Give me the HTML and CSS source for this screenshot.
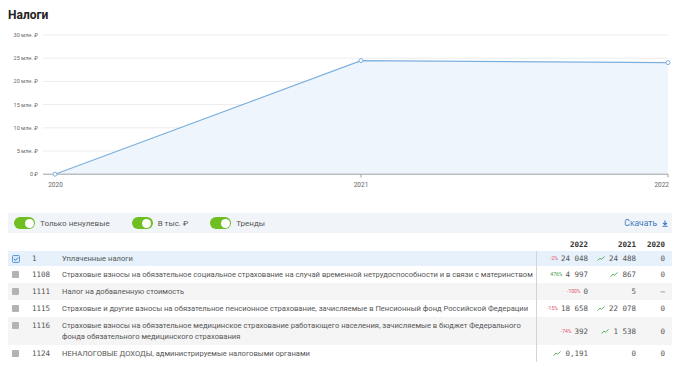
FILE: index.html
```html
<!DOCTYPE html>
<html lang="ru">
<head>
    <meta charset="UTF-8">
    <meta name="viewport" content="width=device-width, initial-scale=1.0">
    <title>Налоги</title>
    <link rel="stylesheet" href="styles.css">
</head>
<body>
    <div class="page">
        <h1 class="title">Налоги</h1>

        <!-- Chart -->
        <svg class="chart" width="664" height="170" viewBox="8 26 664 170">
            <g class="grid">
                <line x1="43" x2="668" y1="35" y2="35"/>
                <line x1="43" x2="668" y1="58.2" y2="58.2"/>
                <line x1="43" x2="668" y1="81.4" y2="81.4"/>
                <line x1="43" x2="668" y1="104.6" y2="104.6"/>
                <line x1="43" x2="668" y1="127.8" y2="127.8"/>
                <line x1="43" x2="668" y1="151" y2="151"/>
            </g>
            <g class="ylabels">
                <text x="38" y="37">30 млн. ₽</text>
                <text x="38" y="60.2">25 млн. ₽</text>
                <text x="38" y="83.4">20 млн. ₽</text>
                <text x="38" y="106.6">15 млн. ₽</text>
                <text x="38" y="129.8">10 млн. ₽</text>
                <text x="38" y="153">5 млн. ₽</text>
                <text x="38" y="176.2">0 ₽</text>
            </g>
            <polygon class="area" points="55,174.2 361,60.6 668,62.6 668,174.2"/>
            <line class="axis" x1="43" x2="668" y1="174.2" y2="174.2"/>
            <line class="axis" x1="361" x2="361" y1="174.2" y2="177.5"/>
            <line class="axis" x1="668" x2="668" y1="174.2" y2="177.5"/>
            <polyline class="line" points="55,174.2 361,60.6 668,62.6"/>
            <circle class="dot" cx="55" cy="174.2" r="2"/>
            <circle class="dot" cx="361" cy="60.6" r="2"/>
            <circle class="dot" cx="668" cy="62.6" r="2"/>
            <g class="xlabels">
                <text x="55.5" y="187">2020</text>
                <text x="361" y="187">2021</text>
                <text x="669" y="187" class="last">2022</text>
            </g>
        </svg>

        <div class="toolbar">
            <label class="switch"><span class="toggle"></span>Только ненулевые</label>
            <label class="switch"><span class="toggle"></span>В тыс. ₽</label>
            <label class="switch"><span class="toggle"></span>Тренды</label>
            <a class="download" href="#">Скачать
                <svg width="6" height="7" viewBox="0 0 6 7"><path d="M3 0.5V4.5M1 2.8L3 4.8L5 2.8M0.5 6.3H5.5" fill="none" stroke="#3a78c2" stroke-width="1.1"/></svg>
            </a>
        </div>

        <div class="table">
            <div class="row head">
                <div></div><div></div><div></div>
                <div class="num">2022</div>
                <div class="num">2021</div>
                <div class="num">2020</div>
            </div>

            <div class="row selected">
                <div><svg class="check-on" width="8" height="8" viewBox="0 0 8 8"><rect x="0.5" y="0.5" width="7" height="7" rx="1" fill="#d6e8fa" stroke="#5b9bd5"/><path d="M2 4L3.5 5.4L6 2.6" fill="none" stroke="#3f84cc" stroke-width="1"/></svg></div>
                <div class="code">1</div>
                <div class="name">Уплаченные налоги</div>
                <div class="num"><span class="pct down">-2%</span>24 048</div>
                <div class="num"><svg class="trend" viewBox="0 0 8 5"><polyline points="0.5,4.5 3,2.2 4.5,3.2 7.5,0.5"/></svg>24 488</div>
                <div class="num">0</div>
            </div>

            <div class="row">
                <div><span class="check"></span></div>
                <div class="code">1108</div>
                <div class="name">Страховые взносы на обязательное социальное страхование на случай временной нетрудоспособности и в связи с материнством</div>
                <div class="num"><span class="pct up">476%</span>4 997</div>
                <div class="num"><svg class="trend" viewBox="0 0 8 5"><polyline points="0.5,4.5 3,2.2 4.5,3.2 7.5,0.5"/></svg>867</div>
                <div class="num">0</div>
            </div>

            <div class="row alt">
                <div><span class="check"></span></div>
                <div class="code">1111</div>
                <div class="name">Налог на добавленную стоимость</div>
                <div class="num"><span class="pct down">-100%</span>0</div>
                <div class="num">5</div>
                <div class="num">–</div>
            </div>

            <div class="row">
                <div><span class="check"></span></div>
                <div class="code">1115</div>
                <div class="name">Страховые и другие взносы на обязательное пенсионное страхование, зачисляемые в Пенсионный фонд Российской Федерации</div>
                <div class="num"><span class="pct down">-15%</span>18 658</div>
                <div class="num"><svg class="trend" viewBox="0 0 8 5"><polyline points="0.5,4.5 3,2.2 4.5,3.2 7.5,0.5"/></svg>22 078</div>
                <div class="num">0</div>
            </div>

            <div class="row alt">
                <div><span class="check"></span></div>
                <div class="code">1116</div>
                <div class="name">Страховые взносы на обязательное медицинское страхование работающего населения, зачисляемые в бюджет Федерального фонда обязательного медицинского страхования</div>
                <div class="num"><span class="pct down">-74%</span>392</div>
                <div class="num"><svg class="trend" viewBox="0 0 8 5"><polyline points="0.5,4.5 3,2.2 4.5,3.2 7.5,0.5"/></svg>1 538</div>
                <div class="num">0</div>
            </div>

            <div class="row">
                <div><span class="check"></span></div>
                <div class="code">1124</div>
                <div class="name">НЕНАЛОГОВЫЕ ДОХОДЫ, администрируемые налоговыми органами</div>
                <div class="num"><svg class="trend" viewBox="0 0 8 5"><polyline points="0.5,4.5 3,2.2 4.5,3.2 7.5,0.5"/></svg>0,191</div>
                <div class="num">0</div>
                <div class="num">0</div>
            </div>
        </div>
    </div>
</body>
</html>
```

FILE: styles.css
```css
body {
    font-family: Roboto, "Noto Sans", sans-serif;
    background-color: #ffffff;
    color: #555555;
    margin: 0;
    padding: 0;
}
.page {
    padding: 8px 8px 0;
}
.title {
    margin: 0;
    font-size: 12px;
    line-height: 14px;
    font-weight: bold;
    color: #222222;
}
.chart {
    display: block;
    margin-top: 4px;
}
.grid line {
    stroke: #ececec;
    stroke-width: 1;
}
.ylabels text {
    font-size: 5.5px;
    fill: #666666;
    text-anchor: end;
}
.xlabels text {
    font-size: 6.5px;
    fill: #666666;
    text-anchor: middle;
}
.xlabels text.last {
    text-anchor: end;
}
.area {
    fill: #eef5fd;
}
.axis {
    stroke: #a0a0a0;
    stroke-width: 1;
}
.line {
    fill: none;
    stroke: #7eb0dd;
    stroke-width: 1.2;
}
.dot {
    fill: #ffffff;
    stroke: #7eb0dd;
    stroke-width: 1;
}
.toolbar {
    display: flex;
    align-items: center;
    height: 20px;
    margin-top: 17px;
    padding: 0 4px 0 6px;
    background-color: #f1f5fa;
    font-size: 8px;
}
.switch {
    display: flex;
    align-items: center;
    gap: 5px;
    margin-right: 22px;
    color: #555555;
}
.toggle {
    width: 21px;
    height: 12px;
    border-radius: 6px;
    background-color: #6fbe22;
    position: relative;
}
.toggle::after {
    content: "";
    position: absolute;
    right: 1.5px;
    top: 1.5px;
    width: 9px;
    height: 9px;
    border-radius: 50%;
    background-color: #ffffff;
}
.download {
    margin-left: auto;
    display: flex;
    align-items: center;
    gap: 5px;
    font-size: 8.5px;
    color: #3a78c2;
    text-decoration: none;
}
.table {
    margin-top: 5px;
}
.row {
    display: grid;
    grid-template-columns: 20px 30px 1fr 55px 48px 32px;
    font-size: 7.6px;
    line-height: 11px;
}
.row > div {
    padding-top: 3px;
    padding-bottom: 3px;
}
.row .name {
    padding-left: 4px;
    padding-right: 2px;
    border-right: 1px solid #d4d4d4;
}
.row.head {
    font-family: "DejaVu Sans Mono", monospace;
    font-weight: bold;
    color: #333333;
}
.row.head > div {
    padding-top: 1px;
    padding-bottom: 1px;
}
.row.head .name {
    border: none;
}
.row.selected {
    background-color: #e6f1fb;
}
.row.selected > div {
    padding-top: 2px;
    padding-bottom: 2px;
}
.row.alt {
    background-color: #f5f5f5;
}
.check {
    display: block;
    width: 7px;
    height: 7px;
    margin: 2px 0 0 4px;
    border-radius: 1px;
    background-color: #b3b3b3;
}
.check-on {
    display: block;
    margin: 1.5px 0 0 4px;
}
.code {
    padding-left: 4px;
    font-family: "DejaVu Sans Mono", monospace;
    font-size: 7.5px;
}
.num {
    display: flex;
    justify-content: flex-end;
    align-items: center;
    gap: 3px;
    padding-right: 4px;
    font-family: "DejaVu Sans Mono", monospace;
    font-size: 7.5px;
}
.row > .num:last-child {
    padding-right: 7px;
}
.pct {
    font-family: Roboto, sans-serif;
    font-size: 5px;
}
.pct.down {
    color: #e2506c;
}
.pct.up {
    color: #3c9c3c;
}
.trend {
    width: 8px;
    height: 5px;
    margin-right: 1px;
}
.trend polyline {
    fill: none;
    stroke: #4aa84a;
    stroke-width: 0.9;
}
```
